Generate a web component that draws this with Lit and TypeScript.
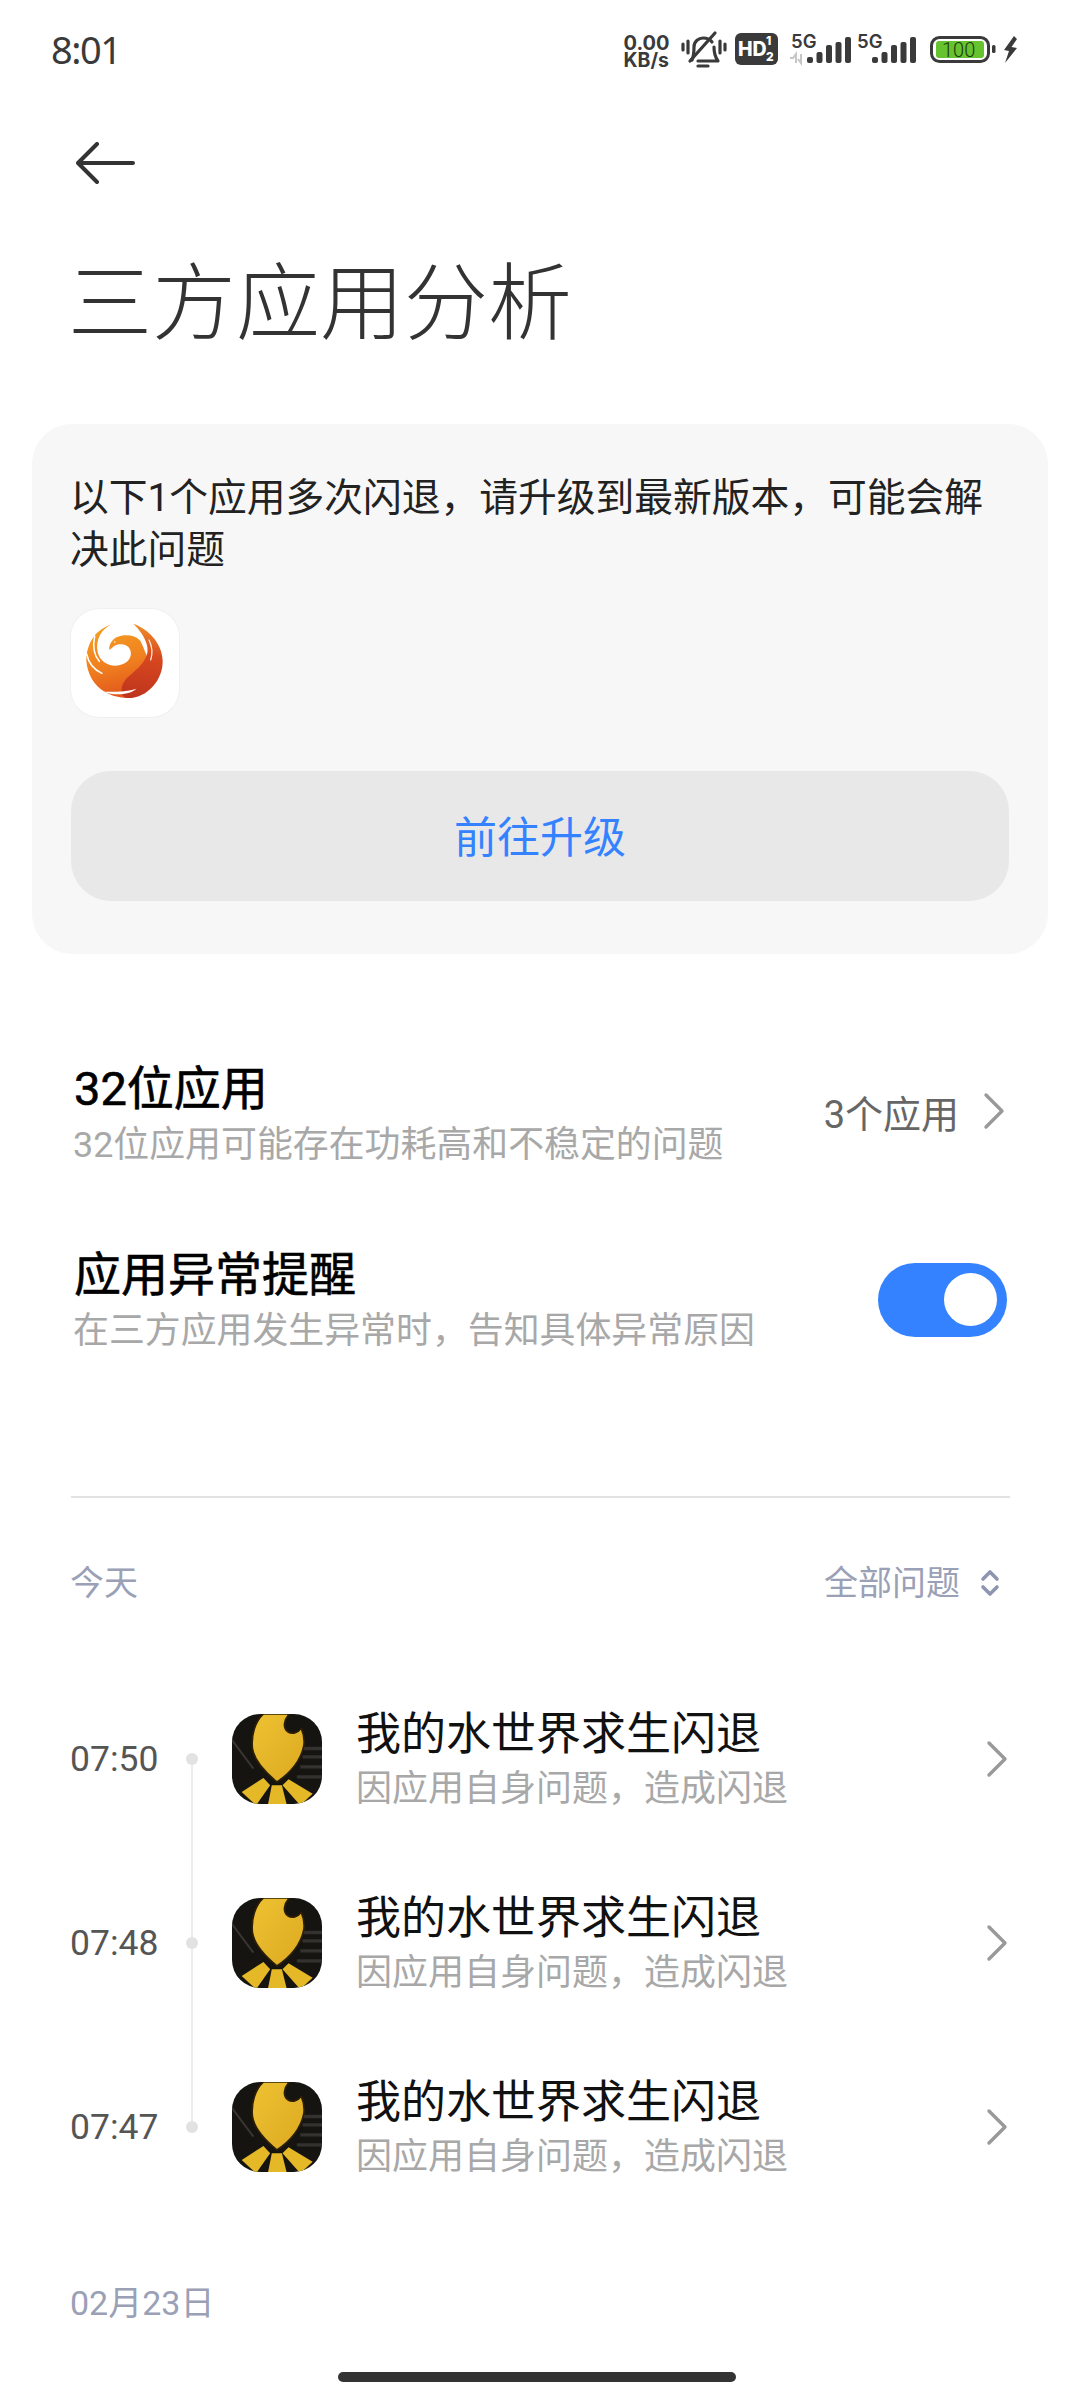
import { LitElement, html, css } from "lit";
import { customElement } from "lit/decorators.js";

const chevron = (cls: string) => html`<svg class=${cls} viewBox="0 0 22 38" fill="none" stroke="currentColor" stroke-width="3.4" stroke-linecap="round" stroke-linejoin="round"><path d="M3 3l16 16L3 35"/></svg>`;

const phoenix = html`<svg class="phoenix" viewBox="123 57 324 324">
  <defs>
    <linearGradient id="ph" x1="0.3" y1="0" x2="0.5" y2="1">
      <stop offset="0" stop-color="#f4a024"/><stop offset="0.55" stop-color="#f0801f"/><stop offset="1" stop-color="#e2551c"/>
    </linearGradient>
    <linearGradient id="pr" x1="0.5" y1="0" x2="0.45" y2="1">
      <stop offset="0" stop-color="#f0912a"/><stop offset="0.42" stop-color="#d8491f"/><stop offset="1" stop-color="#bf341d"/>
    </linearGradient>
  </defs>
  <path fill="url(#ph)" d="M246 103C214 116 196 150 203 186C210 220 250 238 284 220C308 206 308 178 290 167C276 160 262 162 254 167L238 180C236 160 250 141 274 137C296 133 318 138 331 152C340 170 345 185 350 196L340 300L292 324C235 322 176 290 169 212C168 185 178 158 191 140C205 122 225 110 246 103Z"/>
  <path fill="url(#pr)" d="M310 101C352 116 396 156 398 212C400 268 352 326 292 324C270 322 268 290 290 265C312 245 340 225 350 196C358 176 350 140 310 101Z"/>
  <path fill="none" stroke="#fff" stroke-width="4.500" stroke-linecap="round" d="M194 138C188 168 192 196 208 214"/>
  <path fill="none" stroke="#fff" stroke-width="4.500" stroke-linecap="round" d="M170 192C176 222 194 240 216 250"/>
  <path fill="none" stroke="#fff6ec" stroke-width="3.500" stroke-linecap="round" d="M357 150C367 170 368 192 362 210"/>
  <path fill="#fff" d="M222 305C255 319 298 314 320 296C295 304 255 306 222 305Z"/>
  <circle cx="254" cy="156" r="2.500" fill="#fff6d0"/>
</svg>`;

const gameIcon = html`<svg class="game" viewBox="21 27 269 269">
  <defs>
    <linearGradient id="gd" x1="0" y1="0" x2="1" y2="1">
      <stop offset="0" stop-color="#eec233"/><stop offset="1" stop-color="#dca91f"/>
    </linearGradient>
    <clipPath id="gc"><rect x="21" y="27" width="269" height="269" rx="84"/></clipPath>
  </defs>
  <g clip-path="url(#gc)">
    <rect x="21" y="27" width="269" height="269" fill="#151411"/>
    <path d="M21 105L85 190" stroke="#383632" stroke-width="6" fill="none"/>
    <path d="M228 130H290M232 155H290M225 185H290M215 215H290" stroke="#34322e" stroke-width="10" fill="none"/>
    <path fill="url(#gd)" stroke="#2e2006" stroke-width="5" d="M115 27C90 50 78 90 82 130C88 170 125 205 155 230C195 205 228 165 236 120C238 100 235 85 228 70C218 84 200 88 188 80C172 68 176 45 192 27Z"/>
    <path fill="#e4b827" d="M115 218L135 240L93 300L50 260Z"/>
    <path fill="#e4b827" d="M140 240H170L185 300H128Z"/>
    <path fill="#e4b827" d="M190 222L262 265L225 300L172 240Z"/>
  </g>
</svg>`;

const statusIcons = html`
  <svg class="st" width="400" height="48" viewBox="0 -4 400 48">
    <g fill="#3a3a3a" font-family="Inter, Roboto, sans-serif" font-weight="700">
      <text x="3.500" y="20" font-size="20">0.00</text>
      <text x="3.500" y="37" font-size="19.500">KB/s</text>
      <g fill="none" stroke="#3a3a3a" stroke-width="3.200" stroke-linecap="round" stroke-linejoin="round">
        <path d="M72 30C74 26 74 22 74 17C74 11 79 8 83 8C87 8 90 9 92 12"/>
        <path d="M94 17C94 23 95 27 98 31H78"/>
        <path d="M70 31L95 3"/>
        <path d="M68 11V23M63 14V20M100 11V23M105 14V20"/>
        <path d="M78 36H88"/>
      </g>
      <rect x="115" y="3" width="43" height="32" rx="6"/>
      <text x="118" y="26" font-size="19.500" font-weight="800" fill="#fff">HD</text>
      <text x="146" y="15" font-size="12" font-weight="800" fill="#fff">1</text>
      <text x="146" y="31" font-size="12" font-weight="800" fill="#fff">2</text>
      <text x="171" y="18" font-size="18.500" font-weight="600">5G</text>
      <rect x="187" y="27" width="6" height="6" rx="2"/><rect x="196.500" y="22" width="6" height="11" rx="2"/>
      <rect x="206" y="15" width="6" height="18" rx="2"/><rect x="215.500" y="12" width="6" height="21" rx="2"/><rect x="225" y="7" width="6" height="26" rx="2"/>
      <path d="M170 28h3l3-4v9M181 24v9l-3-4" fill="none" stroke="#c6c6c6" stroke-width="2"/>
      <text x="237" y="18" font-size="18.500" font-weight="600">5G</text>
      <rect x="252" y="27" width="6" height="6" rx="2"/><rect x="261.500" y="22" width="6" height="11" rx="2"/>
      <rect x="271" y="15" width="6" height="18" rx="2"/><rect x="280.500" y="12" width="6" height="21" rx="2"/><rect x="290" y="7" width="6" height="26" rx="2"/>
      <rect x="311.500" y="7.500" width="57" height="24" rx="8" fill="none" stroke="#3a3a3a" stroke-width="3"/>
      <rect x="316" y="11" width="48" height="17" rx="3" fill="#67c22f"/>
      <text x="322" y="26.500" font-size="20" font-weight="300" fill="#1c3a0c" font-family="Roboto, sans-serif">100</text>
      <rect x="372" y="15" width="3.500" height="8" rx="1.500"/>
      <path d="M394 6L384 20l5 1-4 12 12-15-5.500-1L397 9z"/>
    </g>
  </svg>
`;

@customElement("app-root")
export class AppRoot extends LitElement {
  static styles = css`
    :host {
      display: block;
      width: 1080px;
      height: 2400px;
      overflow: hidden;
      background: #fff;
      font-family: Roboto, "Noto Sans CJK SC", sans-serif;
      color: #111;
    }
    .status { height: 100px; display: flex; align-items: center; justify-content: space-between; padding: 0 60px 0 51px; box-sizing: border-box; }
    .time { font-size: 38px; color: #3a3a3a; letter-spacing: -1.500px; font-family: "Noto Sans", sans-serif; margin-bottom: 2px; }
    .nav { height: 126px; display: flex; align-items: center; padding-left: 76px; }
    .back { width: 59px; height: 42px; color: #333; }
    h1 { margin: 29px 0 0 68px; font-size: 84px; line-height: 100px; font-weight: 300; color: #333; }
    .card { margin: 69px 32px 0; padding: 48px 39px 53px; background: #f7f7f7; border-radius: 40px; }
    .card p { margin: 0 0 0 -1px; font-size: 38.750px; line-height: 52px; color: #222; font-weight: 400; }
    .app-box { width: 108px; height: 108px; margin-top: 33px; background: #fff; border-radius: 28px; box-shadow: 0 0 0 1px #f0f0f0; display: flex; }
    .phoenix { width: 108px; height: 108px; }
    .btn { margin-top: 54px; height: 130px; padding-bottom: 5px; box-sizing: border-box; border-radius: 40px; background: #e8e8e8; color: #3482ff; font-size: 43px; display: flex; align-items: center; justify-content: center; }
    .row { display: flex; align-items: center; justify-content: space-between; margin: 0 73px 0 74px; }
    .row.first { margin-top: 107px; }
    .row.second { margin-top: 74px; }
    .row-title { font-size: 47px; line-height: 56px; color: #000; font-weight: 400; -webkit-text-stroke: 0.600px #000; }
    .row-sub { font-size: 35.900px; line-height: 56px; color: #a8a8a8; font-weight: 400; margin-left: -1px; }
    .row-right { display: flex; align-items: center; gap: 24px; font-size: 38px; color: #666; padding: 0 2px 12px 0; }
    .chev { width: 22px; height: 38px; color: #999; }
    .toggle { width: 129px; height: 74px; margin-bottom: 7px; border-radius: 37px; background: #3482ff; display: flex; align-items: center; justify-content: flex-end; padding-right: 10px; box-sizing: border-box; }
    .knob { width: 53px; height: 53px; border-radius: 50%; background: #fff; }
    .divider { margin: 137px 70px 0 71px; height: 2px; background: #e2e2e2; }
    .sec { display: flex; justify-content: space-between; align-items: center; margin: 60px 70px 0 70px; font-size: 34px; line-height: 50px; color: #9aa0b6; }
    .sec-right { display: flex; align-items: center; gap: 20px; }
    .updown { width: 20px; height: 30px; margin-right: 10px; }
    .list { margin-top: 59px; }
    .item { height: 184px; display: flex; align-items: center; padding: 0 72px 0 70px; }
    .item-time { width: 116px; font-size: 35.500px; color: #555; }
    .rail { width: 12px; align-self: stretch; display: flex; flex-direction: column; align-items: center; }
    .seg { flex: 1; width: 2px; background: #ececec; }
    .seg.off { background: transparent; }
    .dot { width: 12px; height: 12px; border-radius: 50%; background: #e2e2e2; }
    .game { width: 90px; height: 90px; margin-left: 34px; flex: none; }
    .item-text { margin: 6px 0 0 34px; flex: 1; }
    .item-title { font-size: 45px; line-height: 55px; color: #111; }
    .item-sub { font-size: 36px; line-height: 55px; color: #a8a8a8; }
    .date { margin: 59px 0 0 70px; font-size: 34px; line-height: 50px; color: #9aa0b6; }
    .home { width: 398px; height: 10px; border-radius: 5px; background: #333; margin: 44px 0 0 338px; }
  `;

  render() {
    const times = ["07:50", "07:48", "07:47"];
    return html`
      <div class="status">
        <span class="time">8:01</span>
        ${statusIcons}
      </div>
      <div class="nav">
        <svg class="back" viewBox="0 0 59 42" fill="none" stroke="currentColor" stroke-width="4" stroke-linecap="round" stroke-linejoin="round"><path d="M57 21H3M21 2L2 21l19 19"/></svg>
      </div>
      <h1>三方应用分析</h1>
      <div class="card">
        <p>以下1个应用多次闪退，请升级到最新版本，可能会解决此问题</p>
        <div class="app-box">${phoenix}</div>
        <div class="btn">前往升级</div>
      </div>
      <div class="row first">
        <div>
          <div class="row-title">32位应用</div>
          <div class="row-sub">32位应用可能存在功耗高和不稳定的问题</div>
        </div>
        <div class="row-right">3个应用 ${chevron("chev")}</div>
      </div>
      <div class="row second">
        <div>
          <div class="row-title">应用异常提醒</div>
          <div class="row-sub">在三方应用发生异常时，告知具体异常原因</div>
        </div>
        <div class="toggle"><div class="knob"></div></div>
      </div>
      <div class="divider"></div>
      <div class="sec">
        <span>今天</span>
        <span class="sec-right">全部问题
          <svg class="updown" viewBox="0 0 20 30" fill="none" stroke="#8f95b0" stroke-width="3.600" stroke-linecap="round" stroke-linejoin="round"><path d="M3 11l7-7 7 7M3 19l7 7 7-7"/></svg>
        </span>
      </div>
      <div class="list">
        ${times.map((t, i) => html`
          <div class="item">
            <div class="item-time">${t}</div>
            <div class="rail">
              <div class="seg ${i === 0 ? "off" : ""}"></div>
              <div class="dot"></div>
              <div class="seg ${i === times.length - 1 ? "off" : ""}"></div>
            </div>
            ${gameIcon}
            <div class="item-text">
              <div class="item-title">我的水世界求生闪退</div>
              <div class="item-sub">因应用自身问题，造成闪退</div>
            </div>
            ${chevron("chev")}
          </div>
        `)}
      </div>
      <div class="date">02月23日</div>
      <div class="home"></div>
    `;
  }
}
